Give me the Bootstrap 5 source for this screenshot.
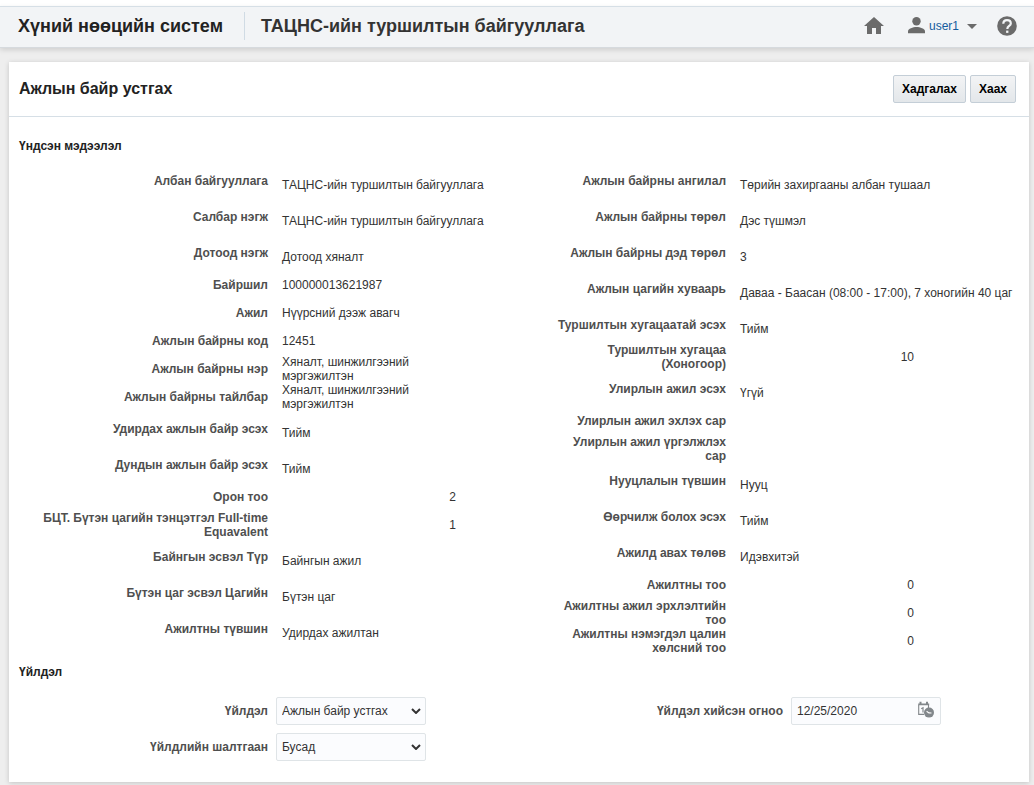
<!DOCTYPE html>
<html lang="mn">
<head>
<meta charset="utf-8">
<meta name="viewport" content="width=device-width, initial-scale=1">
<title>Ажлын байр устгах</title>
<link href="https://cdn.jsdelivr.net/npm/bootstrap@5.3.0/dist/css/bootstrap.min.css" rel="stylesheet">
<style>
body{background:#eee;color:#333;font:12px/14px "Liberation Sans",Arial,sans-serif}
.page-top{background:#fff;padding-top:6px}
.topbar{height:42px;background:#f2f4f6;border-top:1px solid #d6dfe6;border-bottom:1px solid #d6dade;box-shadow:0 2px 5px rgba(0,0,0,.13);padding:0 17px 2px 18px}
.brand-title,.org-title{font-size:18px;line-height:24px;font-weight:700;margin:0;white-space:nowrap}
.brand-title{color:#222}
.org-title{border-left:1px solid #d0dbe4;margin-left:21px;padding-left:16px;line-height:28px}
.topbar svg{display:block;fill:#6b6b6b}
.user-btn{color:#145c9e;font-size:12px;line-height:14px;padding:0;border:0}
.panel{margin:14px 5px 3px 9px;border:0;border-radius:0;box-shadow:0 1px 5px rgba(0,0,0,.18);color:#333;padding-bottom:17px}
.panel-head{height:55px;border-bottom:1px solid #d6dfe6;padding:0 13px 0 10px}
.panel-title{font-size:16px;line-height:20px;font-weight:700;color:#222;margin:0}
.btn-act{--bs-btn-font-size:12px;--bs-btn-line-height:14px;--bs-btn-padding-x:8px;--bs-btn-padding-y:5px;--bs-btn-border-radius:2px;--bs-btn-border-color:#c4ced7;--bs-btn-color:#000;--bs-btn-hover-color:#000;--bs-btn-hover-border-color:#9fb0be;font-weight:700;height:28px;background:linear-gradient(#f3f4f5,#e3e7ea)}
.section-title{font-size:12px;line-height:18px;font-weight:700;color:#222;margin:0;padding:20px 10px 8px}
.section-title.after-data{padding:8px 10px 12px}
.cols{display:grid;grid-template-columns:547fr 473fr}
.field{display:grid;column-gap:8px;align-items:center;min-height:28px}
.side-a .field{grid-template-columns:minmax(0,259fr) minmax(0,280fr)}
.side-b .field{grid-template-columns:minmax(0,170fr) minmax(0,295fr)}
.side-b .field-form{grid-template-columns:minmax(0,227fr) minmax(0,238fr)}
.field dt,.field label{font-weight:700;color:#4f4f4f;text-align:right;padding-left:10px}
.side-b dt{padding-left:0}
.field dd{margin:0;padding-left:6px;max-width:180px}
.field.tall{min-height:36px}
.tall dd{padding-top:8px;max-width:none;white-space:nowrap}
.ctl{width:150px;height:28px;font-size:12px;line-height:14px;color:#333;background-color:#fbfcfe;border:1px solid #dfe4e7;border-radius:2px;padding:6px 5px}
select.ctl{padding-right:24px;background-image:url("data:image/svg+xml,%3Csvg xmlns='http://www.w3.org/2000/svg' viewBox='0 0 10 6'%3E%3Cpath d='M1 1l4 4 4-4' fill='none' stroke='%23333' stroke-width='2'/%3E%3C/svg%3E");background-size:10px 6px;background-position:right 4px center}
.date-box{width:150px}
.date-btn{right:6px;top:4px;line-height:0}
</style>
</head>
<body>
<div class="page-top">
<header class="topbar d-flex align-items-center">
  <h1 class="brand-title">Хүний нөөцийн систем</h1>
  <p class="org-title">ТАЦНС-ийн туршилтын байгууллага</p>
  <nav class="d-flex align-items-center ms-auto">
    <a href="#" aria-label="Нүүр"><svg width="20" height="18" viewBox="0 0 20 18"><path d="M10 0 0 9h3v8h5v-6h4v6h5V9h3z"/></svg></a>
    <button type="button" class="btn user-btn d-flex align-items-center ms-4">
      <svg width="17" height="18" viewBox="0 0 17 18"><circle cx="8.500" cy="4.200" r="4.200"/><path d="M0 16.200v-2c0-2.600 5-4.300 8.500-4.300s8.500 1.700 8.500 4.300v2z"/></svg>
      <span class="ms-1">user1</span>
      <svg class="ms-2" width="10" height="5" viewBox="0 0 10 5"><path d="M0 0h10L5 5z"/></svg>
    </button>
    <a href="#" class="ms-3 ps-1" aria-label="Тусламж"><svg width="20" height="20" viewBox="0 0 20 20"><circle cx="10" cy="10" r="9.800"/><path d="M6.300 7.800C6.300 5.300 8 4.200 10 4.200s3.800 1.200 3.800 3.300c0 2.400-3.500 2.600-3.500 5.400" fill="none" stroke="#f2f4f6" stroke-width="2.200"/><rect x="9.100" y="14.600" width="2.300" height="2.300" fill="#f2f4f6"/></svg></a>
  </nav>
</header>
</div>

<main class="card panel">
  <div class="panel-head d-flex align-items-center">
    <h2 class="panel-title">Ажлын байр устгах</h2>
    <div class="d-flex ms-auto gap-1">
      <button type="button" class="btn btn-act">Хадгалах</button>
      <button type="button" class="btn btn-act">Хаах</button>
    </div>
  </div>

  <h3 class="section-title">Үндсэн мэдээлэл</h3>
  <div class="cols">
    <dl class="side-a m-0">
      <div class="field tall"><dt>Албан байгууллага</dt><dd>ТАЦНС-ийн туршилтын байгууллага</dd></div>
      <div class="field tall"><dt>Салбар нэгж</dt><dd>ТАЦНС-ийн туршилтын байгууллага</dd></div>
      <div class="field tall"><dt>Дотоод нэгж</dt><dd>Дотоод хяналт</dd></div>
      <div class="field"><dt>Байршил</dt><dd>100000013621987</dd></div>
      <div class="field"><dt>Ажил</dt><dd>Нүүрсний дээж авагч</dd></div>
      <div class="field"><dt>Ажлын байрны код</dt><dd>12451</dd></div>
      <div class="field"><dt>Ажлын байрны нэр</dt><dd>Хяналт, шинжилгээний мэргэжилтэн</dd></div>
      <div class="field"><dt>Ажлын байрны тайлбар</dt><dd>Хяналт, шинжилгээний мэргэжилтэн</dd></div>
      <div class="field tall"><dt>Удирдах ажлын байр эсэх</dt><dd>Тийм</dd></div>
      <div class="field tall"><dt>Дундын ажлын байр эсэх</dt><dd>Тийм</dd></div>
      <div class="field"><dt>Орон тоо</dt><dd class="text-end">2</dd></div>
      <div class="field"><dt>БЦТ. Бүтэн цагийн тэнцэтгэл Full-time Equavalent</dt><dd class="text-end">1</dd></div>
      <div class="field tall"><dt>Байнгын эсвэл Түр</dt><dd>Байнгын ажил</dd></div>
      <div class="field tall"><dt>Бүтэн цаг эсвэл Цагийн</dt><dd>Бүтэн цаг</dd></div>
      <div class="field tall"><dt>Ажилтны түвшин</dt><dd>Удирдах ажилтан</dd></div>
    </dl>
    <dl class="side-b m-0">
      <div class="field tall"><dt>Ажлын байрны ангилал</dt><dd>Төрийн захиргааны албан тушаал</dd></div>
      <div class="field tall"><dt>Ажлын байрны төрөл</dt><dd>Дэс түшмэл</dd></div>
      <div class="field tall"><dt>Ажлын байрны дэд төрөл</dt><dd>3</dd></div>
      <div class="field tall"><dt>Ажлын цагийн хуваарь</dt><dd>Даваа - Баасан (08:00 - 17:00), 7 хоногийн 40 цаг</dd></div>
      <div class="field tall"><dt>Туршилтын хугацаатай эсэх</dt><dd>Тийм</dd></div>
      <div class="field"><dt>Туршилтын хугацаа (Хоногоор)</dt><dd class="text-end">10</dd></div>
      <div class="field tall"><dt>Улирлын ажил эсэх</dt><dd>Үгүй</dd></div>
      <div class="field"><dt>Улирлын ажил эхлэх сар</dt><dd></dd></div>
      <div class="field"><dt>Улирлын ажил үргэлжлэх сар</dt><dd></dd></div>
      <div class="field tall"><dt>Нууцлалын түвшин</dt><dd>Нууц</dd></div>
      <div class="field tall"><dt>Өөрчилж болох эсэх</dt><dd>Тийм</dd></div>
      <div class="field tall"><dt>Ажилд авах төлөв</dt><dd>Идэвхитэй</dd></div>
      <div class="field"><dt>Ажилтны тоо</dt><dd class="text-end">0</dd></div>
      <div class="field"><dt>Ажилтны ажил эрхлэлтийн тоо</dt><dd class="text-end">0</dd></div>
      <div class="field"><dt>Ажилтны нэмэгдэл цалин хөлсний тоо</dt><dd class="text-end">0</dd></div>
    </dl>
  </div>

  <h3 class="section-title after-data">Үйлдэл</h3>
  <form class="cols">
    <div class="side-a">
      <div class="field tall"><label for="action">Үйлдэл</label><select id="action" class="form-select ctl"><option>Ажлын байр устгах</option></select></div>
      <div class="field tall"><label for="reason">Үйлдлийн шалтгаан</label><select id="reason" class="form-select ctl"><option>Бусад</option></select></div>
    </div>
    <div class="side-b">
      <div class="field field-form tall"><label for="date">Үйлдэл хийсэн огноо</label>
        <div class="date-box position-relative">
          <input id="date" type="text" class="form-control ctl" value="12/25/2020">
          <button type="button" class="date-btn btn border-0 p-0 position-absolute" aria-label="Огноо сонгох"><svg width="18" height="18" viewBox="0 0 18 18"><path d="M1.700 4v9.400h5.300M11.500 4v3" fill="none" stroke="#82878b" stroke-width="1.100"/><path d="M1.200 2.500h11v1.800h-11zM2.500 .8h2v2.500h-2zM9 .8h2v2.500H9z" fill="#82878b"/><path d="M4.200 7.800 6 6.800V11.500" fill="none" stroke="#82878b" stroke-width="1.200"/><circle cx="12" cy="11.600" r="5" fill="#82878b"/><path d="M9.600 10.200l2.300 1.700 2.600 .1" fill="none" stroke="#fff" stroke-width="1.100"/></svg></button>
        </div>
      </div>
    </div>
  </form>
</main>
<script src="https://cdn.jsdelivr.net/npm/bootstrap@5.3.0/dist/js/bootstrap.bundle.min.js"></script>
</body>
</html>
